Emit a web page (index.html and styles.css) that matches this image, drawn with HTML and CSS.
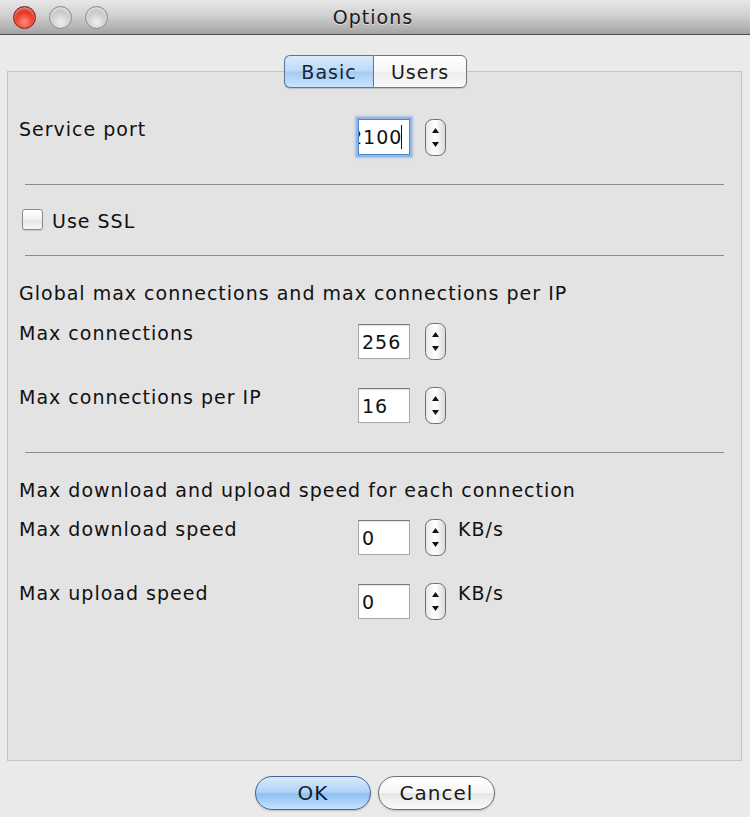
FILE: index.html
```html
<!DOCTYPE html>
<html>
<head>
<meta charset="utf-8">
<title>Options</title>
<link rel="stylesheet" href="styles.css">
</head>
<body>
<div class="window">
  <div class="titlebar">
    <div class="lights">
      <span class="light red"></span>
      <span class="light grey"></span>
      <span class="light grey"></span>
    </div>
    <div class="title">Options</div>
    <div></div>
  </div>

  <div class="content">
    <div class="tabs">
      <span class="tab active">Basic</span>
      <span class="tab">Users</span>
    </div>

    <div class="panel">
      <div class="row row-first">
        <span class="label">Service port</span>
        <div class="field focus"><span class="scrolled">2100</span><span class="caret"></span></div>
        <svg class="spinner" width="21" height="37" viewBox="0 0 21 37"><defs><linearGradient id="sg1" x1="0" y1="0" x2="1" y2="0"><stop offset="0" stop-color="#e6e6e6"/><stop offset="0.5" stop-color="#ffffff"/><stop offset="1" stop-color="#d8d8d8"/></linearGradient></defs><rect x="0.5" y="0.5" width="20" height="36" rx="7" fill="url(#sg1)" stroke="#6e6e6e"/><polygon points="7,14 14,14 10.5,9" fill="#111"/><polygon points="7,23 14,23 10.5,28" fill="#111"/></svg>
      </div>

      <div class="sep sep1"></div>

      <div class="check-row">
        <span class="checkbox"></span>
        <span class="check-label">Use SSL</span>
      </div>

      <div class="sep sep2"></div>

      <div class="heading">Global max connections and max connections per IP</div>

      <div class="row row-a">
        <span class="label">Max connections</span>
        <div class="field">256</div>
        <svg class="spinner" width="21" height="37" viewBox="0 0 21 37"><defs><linearGradient id="sg2" x1="0" y1="0" x2="1" y2="0"><stop offset="0" stop-color="#e6e6e6"/><stop offset="0.5" stop-color="#ffffff"/><stop offset="1" stop-color="#d8d8d8"/></linearGradient></defs><rect x="0.5" y="0.5" width="20" height="36" rx="7" fill="url(#sg2)" stroke="#6e6e6e"/><polygon points="7,14 14,14 10.5,9" fill="#111"/><polygon points="7,23 14,23 10.5,28" fill="#111"/></svg>
      </div>

      <div class="row row-b">
        <span class="label">Max connections per IP</span>
        <div class="field">16</div>
        <svg class="spinner" width="21" height="37" viewBox="0 0 21 37"><defs><linearGradient id="sg3" x1="0" y1="0" x2="1" y2="0"><stop offset="0" stop-color="#e6e6e6"/><stop offset="0.5" stop-color="#ffffff"/><stop offset="1" stop-color="#d8d8d8"/></linearGradient></defs><rect x="0.5" y="0.5" width="20" height="36" rx="7" fill="url(#sg3)" stroke="#6e6e6e"/><polygon points="7,14 14,14 10.5,9" fill="#111"/><polygon points="7,23 14,23 10.5,28" fill="#111"/></svg>
      </div>

      <div class="sep sep3"></div>

      <div class="heading heading2">Max download and upload speed for each connection</div>

      <div class="row row-c">
        <span class="label">Max download speed</span>
        <div class="field">0</div>
        <svg class="spinner" width="21" height="37" viewBox="0 0 21 37"><defs><linearGradient id="sg4" x1="0" y1="0" x2="1" y2="0"><stop offset="0" stop-color="#e6e6e6"/><stop offset="0.5" stop-color="#ffffff"/><stop offset="1" stop-color="#d8d8d8"/></linearGradient></defs><rect x="0.5" y="0.5" width="20" height="36" rx="7" fill="url(#sg4)" stroke="#6e6e6e"/><polygon points="7,14 14,14 10.5,9" fill="#111"/><polygon points="7,23 14,23 10.5,28" fill="#111"/></svg>
        <span class="unit">KB/s</span>
      </div>

      <div class="row row-b">
        <span class="label">Max upload speed</span>
        <div class="field">0</div>
        <svg class="spinner" width="21" height="37" viewBox="0 0 21 37"><defs><linearGradient id="sg5" x1="0" y1="0" x2="1" y2="0"><stop offset="0" stop-color="#e6e6e6"/><stop offset="0.5" stop-color="#ffffff"/><stop offset="1" stop-color="#d8d8d8"/></linearGradient></defs><rect x="0.5" y="0.5" width="20" height="36" rx="7" fill="url(#sg5)" stroke="#6e6e6e"/><polygon points="7,14 14,14 10.5,9" fill="#111"/><polygon points="7,23 14,23 10.5,28" fill="#111"/></svg>
        <span class="unit">KB/s</span>
      </div>
    </div>

    <div class="buttons">
      <span class="button default">OK</span>
      <span class="button">Cancel</span>
    </div>
  </div>
</div>
</body>
</html>
```

FILE: styles.css
```css
* {
  box-sizing: border-box;
}

body {
  margin: 0;
  background: #eaeaea;
  font-family: "DejaVu Sans", "Noto Sans", sans-serif;
  font-size: 19px;
  letter-spacing: 1px;
  color: #111;
}

.window {
  width: 750px;
  height: 817px;
  display: flex;
  flex-direction: column;
}

/* Title bar */
.titlebar {
  height: 35px;
  border-bottom: 1px solid #4f4f4f;
  background: linear-gradient(#e8e8e8, #d0d0d0 45%, #b4b4b4 80%, #a2a2a2);
  display: grid;
  grid-template-columns: 1fr auto 1fr;
  align-items: center;
}

.lights {
  display: flex;
  gap: 13px;
  padding-left: 13px;
  padding-top: 1px;
}

.light {
  width: 23px;
  height: 23px;
  border-radius: 50%;
}

.light.red {
  background: radial-gradient(circle at 50% 72%, #ff8f80 0%, #f0402c 45%, #b4170a 85%, #8c0e05 100%);
  border: 1px solid #7c2418;
  box-shadow: inset 0 2px 3px rgba(255, 255, 255, 0.55);
}

.light.grey {
  background: radial-gradient(circle at 50% 72%, #f0f0f0 0%, #cecece 50%, #acacac 100%);
  border: 1px solid #8a8a8a;
  box-shadow: inset 0 2px 3px rgba(255, 255, 255, 0.6);
}

.title {
  font-size: 19px;
  color: #1a1a1a;
  text-shadow: 0 1px 0 rgba(255, 255, 255, 0.5);
  margin-left: -4px;
}

/* Content */
.content {
  flex: 1;
  display: flex;
  flex-direction: column;
  padding: 0 8px 0 7px;
}

.tabs {
  display: flex;
  justify-content: center;
  margin-top: 20px;
  position: relative;
  z-index: 1;
  margin-left: 2px;
}

.tab {
  height: 33px;
  width: 94px;
  display: flex;
  align-items: center;
  justify-content: center;
  border: 1px solid #6f767f;
  background: linear-gradient(#ffffff, #f7f7f7 50%, #ececec 52%, #fafafa);
  color: #1a1a1a;
  font-size: 19px;
  box-shadow: 0 1px 1px rgba(0, 0, 0, 0.15);
}

.tab:first-child {
  border-radius: 6px 0 0 6px;
  border-right: none;
}

.tab:last-child {
  border-radius: 0 6px 6px 0;
}

.tab.active {
  width: 89px;
  background: linear-gradient(#d9eafb, #bcdaf7 48%, #a3ccf3 52%, #c9e4fd);
  border-color: #5e7391;
  color: #15233a;
}

.panel {
  margin-top: -17px;
  height: 690px;
  border: 1px solid #c4c4c4;
  background: #e3e3e3;
  padding: 48px 17px 0 11px;
  display: flex;
  flex-direction: column;
}

.row {
  display: flex;
  align-items: flex-start;
  height: 35px;
  flex: none;
}

.row-a {
  margin-top: 20px;
}

.row-b {
  margin-top: 29px;
}

.row-c {
  margin-top: 19px;
}

.label {
  flex: 0 0 339px;
  line-height: 22px;
  margin-top: -2px;
}

.field {
  width: 52px;
  height: 35px;
  background: #fff;
  border: 1px solid #a9a9a9;
  border-top-color: #7a7a7a;
  box-shadow: inset 0 1px 1px rgba(0, 0, 0, 0.12);
  padding: 0 3px;
  line-height: 34px;
  font-size: 19px;
  overflow: hidden;
  white-space: nowrap;
}

.field.focus {
  height: 36px;
  margin-top: -1px;
  border: 1px solid #4f84c9;
  box-shadow: 0 0 0 2px #8fb6e6, 0 0 2px 3px rgba(120, 165, 225, 0.55);
  padding: 0;
  display: flex;
  align-items: center;
}

.scrolled {
  margin-left: -9px;
  line-height: 34px;
}

.caret {
  width: 1px;
  height: 24px;
  background: #111;
  flex: none;
  margin-left: -1px;
}

.spinner {
  flex: none;
  margin-left: 15px;
  margin-top: -1px;
  display: block;
}

.unit {
  margin-left: 12px;
  line-height: 22px;
  margin-top: -2px;
}

.sep {
  height: 1px;
  background: #8a8a8a;
  margin-left: 6px;
  flex: none;
}

.sep1 {
  margin-top: 29px;
}

.sep2 {
  margin-top: 25px;
}

.sep3 {
  margin-top: 29px;
}

.check-row {
  display: flex;
  align-items: center;
  margin-top: 24px;
  height: 21px;
  flex: none;
}

.checkbox {
  width: 21px;
  height: 21px;
  margin-left: 3px;
  border: 1px solid #8a8a8a;
  border-radius: 3px;
  background: linear-gradient(#ffffff, #f1f1f1 50%, #e4e4e4 52%, #f7f7f7);
  box-shadow: 0 1px 1px rgba(0, 0, 0, 0.12);
}

.check-label {
  margin-left: 9px;
  line-height: 22px;
  margin-top: 3px;
}

.heading {
  margin-top: 26px;
  line-height: 22px;
  flex: none;
}

/* Buttons */
.buttons {
  display: flex;
  justify-content: center;
  gap: 7px;
  margin-top: 15px;
  margin-left: 1px;
}

.button {
  height: 34px;
  width: 117px;
  border-radius: 17px;
  display: flex;
  align-items: center;
  justify-content: center;
  border: 1px solid #6f6f6f;
  background: linear-gradient(#ffffff, #f6f6f6 48%, #e6e6e6 52%, #fbfbfb);
  box-shadow: 0 1px 2px rgba(0, 0, 0, 0.2);
  color: #1a1a1a;
  font-size: 20px;
}

.button.default {
  width: 116px;
  border-color: #45648f;
  background: linear-gradient(#d6e9fc, #b1d4f6 46%, #8ec0f1 54%, #c6e4fe);
  color: #101a2b;
}
```
